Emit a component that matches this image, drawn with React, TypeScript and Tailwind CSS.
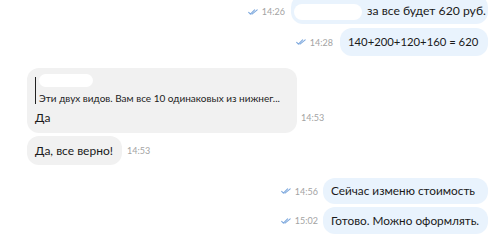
import React from "react";

const Check = () => (
  <svg width="11" height="6" viewBox="0 0 11 6" fill="none" stroke="#7ea9de" strokeWidth="1.1" strokeLinecap="round" strokeLinejoin="round">
    <path d="M0.7 3.4 L2.4 5.2 L6.6 0.8" />
    <path d="M4 5.2 L9.2 0.8" />
  </svg>
);

const Time = ({ t, check }: { t: string; check?: boolean }) => (
  <div className="flex items-center gap-[3px] text-[9px] leading-none text-[#a3a3a3]">
    {check && <Check />}
    <span>{t}</span>
  </div>
);

export default function App() {
  return (
    <div
      className="w-[496px] h-[243px] overflow-hidden bg-white flex flex-col"
      style={{ fontFamily: "Lato, 'Noto Sans', sans-serif" }}
    >
      {/* msg 1 */}
      <div className="flex justify-end items-center gap-[6px] pr-[8px] mt-[-5px]">
        <div className="mt-[4px]"><Time t="14:26" check /></div>
        <div className="h-[29px] w-[197px] rounded-[12px] bg-[#e9f3fd] flex items-center pl-[3px]">
          <div className="w-[68px] h-[16px] rounded-full bg-white mt-[4px]" />
          <span className="ml-[5px] mt-[4px] text-[12.2px] text-[#1a1a1a] whitespace-nowrap">за все будет 620 руб.</span>
        </div>
      </div>
      {/* msg 2 */}
      <div className="flex justify-end items-center gap-[7px] pr-[8px] mt-[4px]">
        <Time t="14:28" check />
        <div className="h-[28px] w-[148px] rounded-[12px] bg-[#e9f3fd] flex items-center pl-[8px]">
          <span className="text-[11.3px] text-[#1a1a1a] whitespace-nowrap">140+200+120+160 = 620</span>
        </div>
      </div>
      {/* msg 3 */}
      <div className="flex items-end gap-[4px] pl-[27px] mt-[12px]">
        <div className="w-[270px] h-[65px] rounded-[12px] bg-[#f1f1f1] pt-[6px] pl-[8px]">
          <div className="flex">
            <div className="w-[1px] h-[27px] bg-[#222] mt-[3px]" />
            <div className="flex flex-col pl-[3px]">
              <div className="w-[54px] h-[13px] rounded-full bg-white" />
              <span className="mt-[6px] text-[10px] leading-none text-[#222] whitespace-nowrap">
                Эти двух видов. Вам все 10 одинаковых из нижнег...
              </span>
            </div>
          </div>
          <div className="mt-[8px] text-[12px] leading-none text-[#1a1a1a]">Да</div>
        </div>
        <div className="mb-[11px]"><Time t="14:53" /></div>
      </div>
      {/* msg 4 */}
      <div className="flex items-center gap-[5px] pl-[27px] mt-[3px]">
        <div className="h-[29px] w-[95px] rounded-[12px] bg-[#f1f1f1] flex items-center pl-[8px]">
          <span className="text-[12px] text-[#1a1a1a] whitespace-nowrap">Да, все верно!</span>
        </div>
        <Time t="14:53" />
      </div>
      {/* msg 5 */}
      <div className="flex justify-end items-center gap-[5px] pr-[8px] mt-[13px]">
        <Time t="14:56" check />
        <div className="h-[26px] w-[165px] rounded-[12px] bg-[#e9f3fd] flex items-center pl-[8px]">
          <span className="text-[11.8px] text-[#1a1a1a] whitespace-nowrap">Сейчас изменю стоимость</span>
        </div>
      </div>
      {/* msg 6 */}
      <div className="flex justify-end items-center gap-[5px] pr-[8px] mt-[3px]">
        <Time t="15:02" check />
        <div className="h-[27px] w-[165px] rounded-[12px] bg-[#e9f3fd] flex items-center pl-[8px]">
          <span className="text-[11.8px] text-[#1a1a1a] whitespace-nowrap">Готово. Можно оформлять.</span>
        </div>
      </div>
    </div>
  );
}
